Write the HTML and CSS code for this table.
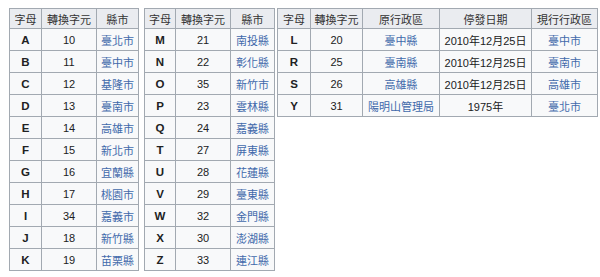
FILE: index.html
```html
<!DOCTYPE html>
<html lang="zh-Hant">
<head>
<meta charset="utf-8">
<link rel="stylesheet" href="styles.css">
</head>
<body>
<div class="wrap">
  <table class="wt t1">
    <colgroup><col class="c-l1"><col class="c-n"><col class="c-c1"></colgroup>
    <tr><th>字母</th><th>轉換字元</th><th>縣市</th></tr>
    <tr><td class="b">A</td><td>10</td><td class="lk">臺北市</td></tr>
    <tr><td class="b">B</td><td>11</td><td class="lk">臺中市</td></tr>
    <tr><td class="b">C</td><td>12</td><td class="lk">基隆市</td></tr>
    <tr><td class="b">D</td><td>13</td><td class="lk">臺南市</td></tr>
    <tr><td class="b">E</td><td>14</td><td class="lk">高雄市</td></tr>
    <tr><td class="b">F</td><td>15</td><td class="lk">新北市</td></tr>
    <tr><td class="b">G</td><td>16</td><td class="lk">宜蘭縣</td></tr>
    <tr><td class="b">H</td><td>17</td><td class="lk">桃園市</td></tr>
    <tr><td class="b">I</td><td>34</td><td class="lk">嘉義市</td></tr>
    <tr><td class="b">J</td><td>18</td><td class="lk">新竹縣</td></tr>
    <tr><td class="b">K</td><td>19</td><td class="lk">苗栗縣</td></tr>
  </table>
  <table class="wt t2">
    <colgroup><col class="c-l2"><col class="c-n"><col class="c-c2"></colgroup>
    <tr><th>字母</th><th>轉換字元</th><th>縣市</th></tr>
    <tr><td class="b">M</td><td>21</td><td class="lk">南投縣</td></tr>
    <tr><td class="b">N</td><td>22</td><td class="lk">彰化縣</td></tr>
    <tr><td class="b">O</td><td>35</td><td class="lk">新竹市</td></tr>
    <tr><td class="b">P</td><td>23</td><td class="lk">雲林縣</td></tr>
    <tr><td class="b">Q</td><td>24</td><td class="lk">嘉義縣</td></tr>
    <tr><td class="b">T</td><td>27</td><td class="lk">屏東縣</td></tr>
    <tr><td class="b">U</td><td>28</td><td class="lk">花蓮縣</td></tr>
    <tr><td class="b">V</td><td>29</td><td class="lk">臺東縣</td></tr>
    <tr><td class="b">W</td><td>32</td><td class="lk">金門縣</td></tr>
    <tr><td class="b">X</td><td>30</td><td class="lk">澎湖縣</td></tr>
    <tr><td class="b">Z</td><td>33</td><td class="lk">連江縣</td></tr>
  </table>
  <table class="wt t3">
    <colgroup><col class="c-l3"><col class="c-n3"><col class="c-o"><col class="c-d"><col class="c-p"></colgroup>
    <tr><th>字母</th><th>轉換字元</th><th>原行政區</th><th>停發日期</th><th>現行行政區</th></tr>
    <tr><td class="b">L</td><td>20</td><td class="lk">臺中縣</td><td>2010年12月25日</td><td class="lk">臺中市</td></tr>
    <tr><td class="b">R</td><td>25</td><td class="lk">臺南縣</td><td>2010年12月25日</td><td class="lk">臺南市</td></tr>
    <tr><td class="b">S</td><td>26</td><td class="lk">高雄縣</td><td>2010年12月25日</td><td class="lk">高雄市</td></tr>
    <tr><td class="b">Y</td><td>31</td><td class="lk">陽明山管理局</td><td>1975年</td><td class="lk">臺北市</td></tr>
  </table>
</div>
</body>
</html>
```
FILE: styles.css
```css
html, body {
  margin: 0;
  padding: 0;
  background: #ffffff;
}
body {
  font-family: "Liberation Sans", Arial, "Noto Sans CJK TC", sans-serif;
  font-size: 11px;
  color: #202122;
}
.wrap {
  display: flex;
  align-items: flex-start;
  padding: 8px 0 0 9px;
}
.wt {
  border-collapse: collapse;
  table-layout: fixed;
  background: #f8f9fa;
  border: 1px solid #a2a9b1;
}
.t1 { width: 129px; }
.t2 { width: 130px; margin-left: 5px; }
.t3 { width: 320px; margin-left: 2px; }
.c-l1 { width: 32px; }
.c-n { width: 55px; }
.c-c1 { width: 42px; }
.c-l2 { width: 31px; }
.c-c2 { width: 44px; }
.c-l3 { width: 33px; }
.c-n3 { width: 52px; }
.c-o { width: 77px; }
.c-d { width: 92px; }
.c-p { width: 66px; }
.wt th, .wt td {
  border: 1px solid #a2a9b1;
  padding: 0 2px;
  text-align: center;
  white-space: nowrap;
  overflow: hidden;
}
.wt th {
  background: #eaecf0;
  font-weight: normal;
  height: 19px;
  color: #333333;
  font-size: 11px;
}
.wt td {
  height: 21px;
}
.b {
  font-weight: bold;
  font-size: 11.5px;
}
.lk {
  color: #4169ab;
}
```
